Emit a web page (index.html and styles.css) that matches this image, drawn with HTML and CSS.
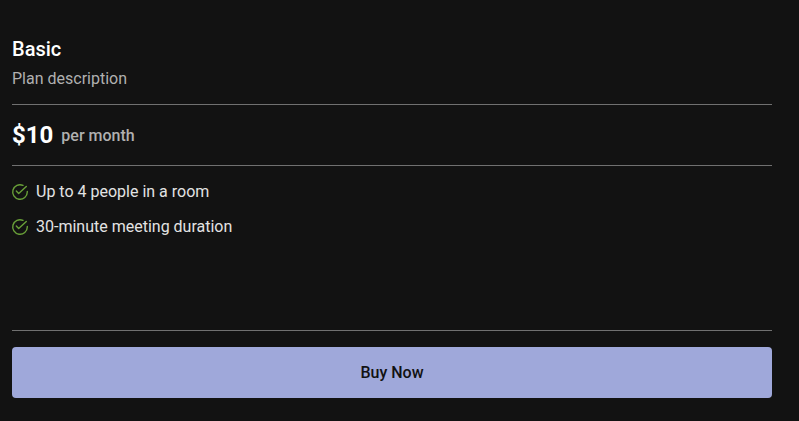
FILE: index.html
```html
<!DOCTYPE html>
<html lang="en">
<head>
<meta charset="utf-8">
<title>Basic plan</title>
<link rel="stylesheet" href="styles.css">
</head>
<body>
<main class="plan">
  <h1 class="name">Basic</h1>
  <p class="description">Plan description</p>
  <div class="price"><strong class="amount">$10</strong><span class="period">per month</span></div>
  <ul class="features">
    <li class="feature"><svg class="check" viewBox="0 0 16 16"><path d="M15.3 7.4V8A7.3 7.3 0 1 1 11 1.35"/><path d="M4.3 7.1 6.7 9.6 14.3 2.4"/></svg>Up to 4 people in a room</li>
    <li class="feature"><svg class="check" viewBox="0 0 16 16"><path d="M15.3 7.4V8A7.3 7.3 0 1 1 11 1.35"/><path d="M4.3 7.1 6.7 9.6 14.3 2.4"/></svg>30-minute meeting duration</li>
  </ul>
  <button class="buy" type="button">Buy Now</button>
</main>
</body>
</html>
```

FILE: styles.css
```css
* { box-sizing: border-box; }
body {
  margin: 0;
  background: #121212;
  color: #fff;
  font: 400 16px/24px Roboto, sans-serif;
}
.plan {
  width: 760px;
  margin: 0 0 0 12px;
  padding-top: 33px;
}
.name { margin: 0; font-size: 20px; font-weight: 500; line-height: 32px; }
.description { margin: 2px 0 13px; color: #b0b0b0; }
.price {
  display: flex;
  align-items: center;
  gap: 8px;
  height: 62px;
  border-top: 1px solid #707070;
  border-bottom: 1px solid #707070;
}
.amount { font-size: 24px; font-weight: 700; }
.period { padding-top: 2px; color: #b0b0b0; font-weight: 500; }
.features {
  height: 165px;
  margin: 0;
  padding: 14px 0 0;
  list-style: none;
  border-bottom: 1px solid #707070;
}
.feature { display: flex; align-items: center; gap: 8px; margin-bottom: 11px; color: #e3e3e3; }
.check {
  width: 16px;
  height: 16px;
  fill: none;
  stroke: #689f38;
  stroke-width: 1.4;
  stroke-linecap: round;
  stroke-linejoin: round;
  overflow: visible;
}
.buy {
  display: block;
  width: 100%;
  height: 51px;
  margin-top: 16px;
  border: 0;
  border-radius: 4px;
  background: #9fa8da;
  color: #121212;
  font: 500 16px/24px Roboto, sans-serif;
}
```
